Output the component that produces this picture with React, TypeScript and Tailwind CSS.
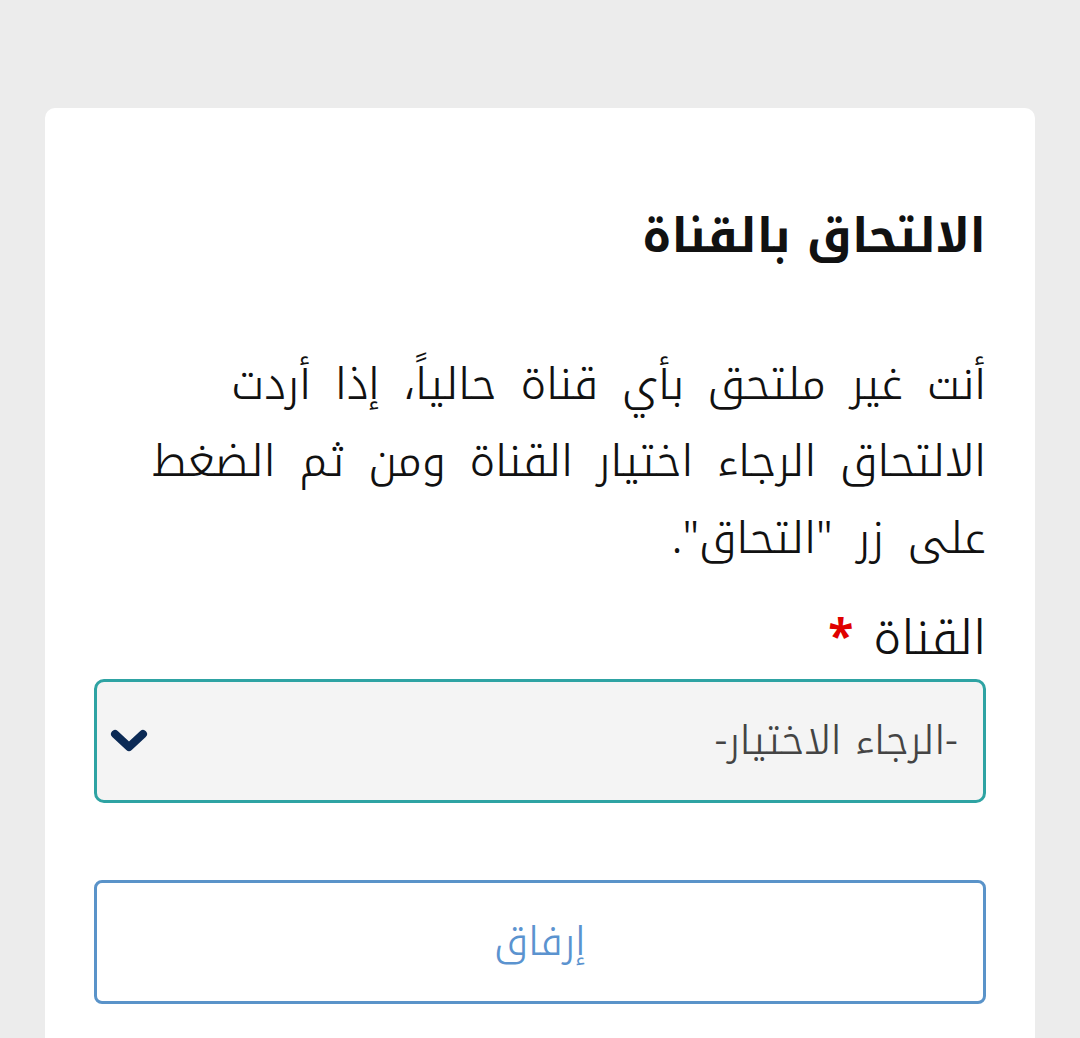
function Chevron() {
  return (
    <svg width="38" height="24" viewBox="0 0 38 24" className="shrink-0">
      <polyline
        points="5,5 19,18 33,5"
        fill="none"
        stroke="#0b2a55"
        strokeWidth="8"
        strokeLinecap="round"
        strokeLinejoin="round"
      />
    </svg>
  );
}

export default function App() {
  return (
    <div
      dir="rtl"
      className="min-h-[1038px] w-full bg-[#ececec] pt-[108px] px-[45px] overflow-hidden"
      style={{ fontFamily: '"Noto Kufi Arabic", "DejaVu Sans", sans-serif' }}
    >
      <div className="bg-white rounded-[10px] px-[49px] pt-[92px] pb-[60px] min-h-[960px]">
        <h1 className="text-[47px] font-bold text-[#111] leading-[74px]">الالتحاق بالقناة</h1>

        <p className="mt-[72px] text-[44px] font-light leading-[77px] text-[#111] [word-spacing:9px]">
          أنت غير ملتحق بأي قناة حالياً، إذا أردت
          <br />
          الالتحاق الرجاء اختيار القناة ومن ثم الضغط
          <br />
          على زر "التحاق".
        </p>

        <label className="mt-[30px] flex items-center gap-[20px] text-[48px] font-light leading-[62px] text-[#111]">
          <span>القناة</span>
          <span className="text-[#e00000] font-bold text-[46px]">*</span>
        </label>

        <div className="mt-[10px] h-[124px] rounded-[10px] border-[3px] border-[#2ea3a3] bg-[#f4f4f4] flex items-center justify-between pr-[25px] pl-[13px]">
          <span className="text-[40px] font-light text-[#444]">-الرجاء الاختيار-</span>
          <Chevron />
        </div>

        <button className="mt-[77px] w-full h-[124px] rounded-[8px] border-[3px] border-[#5a93c9] bg-white flex items-center justify-center text-[40px] font-light text-[#5b93cf]">
          إرفاق
        </button>
      </div>
    </div>
  );
}
